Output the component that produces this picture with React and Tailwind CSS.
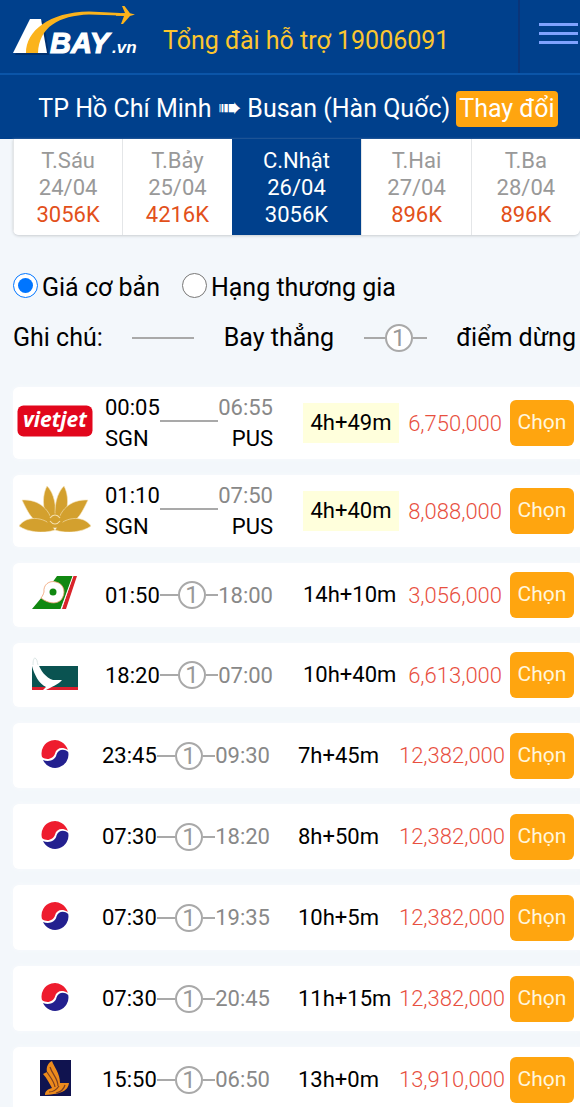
import React, { useState } from 'react';

const DAYS = [
  { name: 'T.Sáu', date: '24/04', price: '3056K' },
  { name: 'T.Bảy', date: '25/04', price: '4216K' },
  { name: 'C.Nhật', date: '26/04', price: '3056K' },
  { name: 'T.Hai', date: '27/04', price: '896K' },
  { name: 'T.Ba', date: '28/04', price: '896K' },
];

const FLIGHTS = [
  { id: 1, airline: 'vietjet', depart: '00:05', arrive: '06:55', from: 'SGN', to: 'PUS', duration: '4h+49m', price: 6750000 },
  { id: 2, airline: 'vietnam', depart: '01:10', arrive: '07:50', from: 'SGN', to: 'PUS', duration: '4h+40m', price: 8088000 },
  { id: 3, airline: 'eva', depart: '01:50', arrive: '18:00', stops: 1, duration: '14h+10m', price: 3056000 },
  { id: 4, airline: 'cathay', depart: '18:20', arrive: '07:00', stops: 1, duration: '10h+40m', price: 6613000 },
  { id: 5, airline: 'korean', depart: '23:45', arrive: '09:30', stops: 1, duration: '7h+45m', price: 12382000 },
  { id: 6, airline: 'korean', depart: '07:30', arrive: '18:20', stops: 1, duration: '8h+50m', price: 12382000 },
  { id: 7, airline: 'korean', depart: '07:30', arrive: '19:35', stops: 1, duration: '10h+5m', price: 12382000 },
  { id: 8, airline: 'korean', depart: '07:30', arrive: '20:45', stops: 1, duration: '11h+15m', price: 12382000 },
  { id: 9, airline: 'singapore', depart: '15:50', arrive: '06:50', stops: 1, duration: '13h+0m', price: 13910000 },
];

const formatPrice = (price) => price.toLocaleString('en-US');

const AbayLogo = () => (
  <svg className="overflow-visible" width="126" height="60" viewBox="0 0 126 60" role="img" aria-label="Abay.vn">
    <path d="M2 50 L20 16 H31 L36 50 Z" fill="#00265e" opacity="0.6" />
    <path d="M0 48 L17 14 H28 L34 48 Z" fill="#fff" />
    <path d="M13 48 C13 26 36 7 76 6.500 L107 8 L107 10.500 L76 9.500 C46 10.500 26 22 25 48 Z" fill="#fbb31c" />
    <path d="M103 8.200 L112 8 L109 1 H111.500 L117 8.200 L122 9.500 L117 11 L110 19 H108 L111 11 L103 10.800 Z" fill="#fbb31c" />
    <g fontFamily="Liberation Sans, sans-serif" fontStyle="italic" fontWeight="700">
      <text x="37" y="48" fontSize="29" fill="#fff" stroke="#fff" strokeWidth="1.200">BAY</text>
      <text x="99" y="48" fontSize="17" fill="#fff">.vn</text>
    </g>
  </svg>
);

const VietjetLogo = () => (
  <svg className="overflow-visible" width="76" height="32" viewBox="0 0 76 32" role="img" aria-label="Vietjet">
    <rect x="0.500" y="0.500" width="75" height="31" rx="6" fill="#e2061c" />
    <text x="38" y="22" textAnchor="middle" fontFamily="Open Sans, sans-serif" fontSize="21" fontWeight="700" fontStyle="italic" fill="#fff">
      vietjet
    </text>
  </svg>
);

const LotusLogo = () => (
  <svg width="72" height="46" viewBox="0 0 72 46" role="img" aria-label="Vietnam Airlines">
    <g fill="#d3a02e" stroke="#f6e6c0" strokeWidth="0.600">
      <path d="M35 38 C25 34 21 13 28 0 C35 7 38 20 36 36 Z" />
      <path d="M37 38 C34 20 38 7 45 0 C52 13 48 34 38 38 Z" />
      <path d="M34 42 C14 40 9 26 3 14 C20 13 33 24 34 42 Z" />
      <path d="M38 42 C39 24 52 13 69 14 C63 26 58 40 38 42 Z" />
      <path d="M36 44 C24 48 8 46 0 40 C8 28 29 31 36 44 Z" />
      <path d="M36 44 C43 31 64 28 72 40 C64 46 48 48 36 44 Z" />
    </g>
    <path d="M28 35 C31 25 41 25 44 35 C42 44 30 44 28 35 Z" fill="#d3a02e" />
    <path d="M31 32 C34 28 38 28 41 32 M31 35 C34 39 38 39 41 35" fill="none" stroke="#f3dfae" strokeWidth="1.200" />
  </svg>
);

const EvaLogo = () => (
  <svg width="46" height="36" viewBox="0 0 46 36" role="img" aria-label="EVA Air">
    <path d="M25 1 H41 L29 34 H0 L10 22 Z" fill="#118811" />
    <path d="M9 23 C11 20 11 20 12 17 C11 10 17 5 24 7 C33 9 34 19 29 25 C24 30 15 28 9 23 Z" fill="#fff" stroke="#f0a070" strokeWidth="0.800" />
    <circle cx="21" cy="17" r="3.500" fill="#118811" />
    <path d="M41 1 H45 L34 34 H30 Z" fill="#d8242a" />
    <path d="M41 1 L29 34" stroke="#fff" strokeWidth="1" />
  </svg>
);

const CathayLogo = () => (
  <svg width="48" height="34" viewBox="0 0 48 34" role="img" aria-label="Cathay Pacific">
    <rect x="1" y="10" width="46" height="21" fill="#0a5351" />
    <rect x="1" y="31" width="46" height="3" fill="#dc1f2d" />
    <path d="M1 5 C3 2 5 3 7 7 C9 14 15 22 22 24 H31 C27 29 20 31 15 34 H12 L15 31 C8 28 3 18 1 10 Z" fill="#fff" />
    <path d="M2 9 C2 4 3 2 4 2 C6 3 6 5 7 9" fill="none" stroke="#dbe6e5" strokeWidth="1" />
  </svg>
);

const KoreanLogo = () => (
  <svg width="28" height="28" viewBox="0 0 28 28" role="img" aria-label="Korean Air">
    <circle cx="14" cy="14" r="13" fill="#fff" />
    <path d="M1 17 A13.300 13.300 0 0 1 26.800 10 C21 6.500 15.500 8 14 13.500 C12.500 18.500 6 21 1 17 Z" fill="#ee1c2e" />
    <path d="M27.200 12 A13.300 13.300 0 0 1 2 20 C8 22.500 14.500 20 15.500 14.500 C17 9.500 23 8 27.200 12 Z" fill="#23208f" />
  </svg>
);

const SingaporeLogo = () => (
  <svg width="31" height="36" viewBox="0 0 31 36" role="img" aria-label="Singapore Airlines">
    <rect width="31" height="36" fill="#10134f" />
    <path d="M12 1 C14 7 20 13 20 23 L29 23 C28 30 23 34 5 35 C5 31 8 29 12 28 C9 23 7 18 3 14 L7 12 C6 7 8 3 12 1 Z" fill="#ec8a1c" />
    <path d="M7 12 C10 17 14 21 15 27 M10 7 C12 14 18 18 18 26 M9 32 C14 32 17 29 19 26 M16 33 C20 32 24 29 25 25" fill="none" stroke="#7c3f22" strokeWidth="1.200" />
  </svg>
);

const LOGOS = {
  vietjet: VietjetLogo,
  vietnam: LotusLogo,
  eva: EvaLogo,
  cathay: CathayLogo,
  korean: KoreanLogo,
  singapore: SingaporeLogo,
};

// Đường bay có điểm dừng
const StopLine = ({ stops }) => (
  <span className="flex flex-1 items-center">
    <span className="h-[2px] flex-[3] bg-[#a9a9a9]" />
    <span className="flex size-7 items-center justify-center rounded-full border-2 border-[#a9a9a9] bg-white text-2xl leading-6 text-[#999]">
      {stops}
    </span>
    <span className="h-[2px] flex-[2] bg-[#a9a9a9]" />
  </span>
);

const DayTab = ({ day, active, onClick }) => (
  <button
    type="button"
    aria-pressed={active}
    onClick={onClick}
    className={`flex flex-col items-center pt-2 pb-[7px] text-[22px] leading-[27px] ${
      active ? 'flex-[6] bg-[#00408c] text-white' : 'flex-[5] border-l border-[#e4e6e8] bg-white text-[#999]'
    }`}
  >
    <span>{day.name}</span>
    <span>{day.date}</span>
    <span className={active ? 'text-white' : 'text-[#e2501a]'}>{day.price}</span>
  </button>
);

const FlightRow = ({ flight }) => {
  const Logo = LOGOS[flight.airline];
  const direct = !flight.stops;
  // Giá từ 10 triệu cần cột rộng hơn
  const wide = flight.price >= 10000000;

  return (
    <li
      className={`flex items-center rounded-l-md bg-white pr-[6px] text-[22px] shadow-[0_0_4px_#f8fafc] ${
        direct ? 'h-[72px]' : wide ? 'h-[65px]' : 'h-16'
      }`}
    >
      <div className={`flex shrink-0 ${wide ? 'w-[89px]' : 'w-[92px]'}`}>
        <div className="flex w-[84px] justify-center pb-1">
          <Logo />
        </div>
      </div>

      <div className="flex w-[168px] shrink-0 items-center leading-[31px]">
        <div className="flex flex-col">
          <span>{flight.depart}</span>
          {direct && <span>{flight.from}</span>}
        </div>
        {direct ? <span className="mb-1 h-[2px] flex-1 bg-[#a9a9a9]" /> : <StopLine stops={flight.stops} />}
        <div className="flex flex-col items-end">
          <span className="text-[#888]">{flight.arrive}</span>
          {direct && <span>{flight.to}</span>}
        </div>
      </div>

      <div
        className={`w-24 shrink-0 whitespace-nowrap leading-10 ${wide ? 'ml-7' : 'ml-[30px]'} ${
          direct ? 'bg-[#ffffdc] text-center' : ''
        }`}
      >
        {flight.duration}
      </div>

      <div className={`flex-1 text-right font-light text-[#e8503f] ${wide ? 'pr-[5px]' : 'pr-2'}`}>
        {formatPrice(flight.price)}
      </div>

      <button type="button" className="h-[46px] w-16 shrink-0 rounded-md bg-[#ffa50f] text-[21px] text-[#fff6dc]">
        Chọn
      </button>
    </li>
  );
};

const App = () => {
  const [selectedDay, setSelectedDay] = useState(2);
  const [cabin, setCabin] = useState('basic');

  return (
    <div className="min-h-screen overflow-hidden bg-[#f3f7fb] font-[Roboto,sans-serif] text-[22px] text-black">
      <header className="bg-[#00408c]">
        <div className="flex h-[75px] border-b-2 border-[#0b55a8]">
          <a href="#home" className="pt-[5px] pl-[13px]">
            <AbayLogo />
          </a>
          <a href="tel:19006091" className="flex flex-1 items-center pt-2 pl-6 text-[25px] text-[#fcc62f]">
            Tổng đài hỗ trợ 19006091
          </a>
          <button type="button" aria-label="Menu" className="flex w-[62px] justify-end border-l-2 border-[#0a3579] pt-[23px] pr-[2px]">
            <span className="flex w-[39px] flex-col gap-[6px]">
              <span className="h-[3px] bg-[#7fa3ff]" />
              <span className="h-[3px] bg-[#7fa3ff]" />
              <span className="h-[3px] bg-[#7fa3ff]" />
            </span>
          </button>
        </div>
        <div className="flex h-16 items-center justify-center gap-[6px] pt-1 pl-4 text-[25px] leading-9 text-white">
          <h1>
            TP Hồ Chí Minh <span className="font-['DejaVu_Sans'] text-[28px] leading-6">➠</span> Busan (Hàn Quốc)
          </h1>
          <a href="#change" className="rounded-sm bg-[#ffa50f] px-[3px]">Thay đổi</a>
        </div>
      </header>

      <main className="pl-[13px]">
        <nav className="flex overflow-hidden rounded-b-md shadow-[0_1px_3px_#c8ccd0]">
          {DAYS.map((day, index) => (
            <DayTab key={day.date} day={day} active={index === selectedDay} onClick={() => setSelectedDay(index)} />
          ))}
        </nav>

        <div className="mt-[33px] flex items-center gap-[22px] text-[25px] leading-10">
          <label className="flex items-center gap-1">
            <input type="radio" name="cabin" className="mb-[6px] size-[25px]" checked={cabin === 'basic'} onChange={() => setCabin('basic')} />
            Giá cơ bản
          </label>
          <label className="flex items-center gap-1">
            <input type="radio" name="cabin" className="mb-[6px] size-[25px]" checked={cabin === 'business'} onChange={() => setCabin('business')} />
            Hạng thương gia
          </label>
        </div>

        <div className="mt-[10px] flex items-center justify-between pr-1 text-[25px] leading-10">
          <span>Ghi chú:</span>
          <span className="h-[2px] w-[62px] bg-[#a9a9a9]" />
          <span>Bay thẳng</span>
          <span className="flex w-[63px]">
            <StopLine stops={1} />
          </span>
          <span>điểm dừng</span>
        </div>

        <ul className="mt-[29px] flex flex-col gap-4">
          {FLIGHTS.map((flight) => (
            <FlightRow key={flight.id} flight={flight} />
          ))}
        </ul>
      </main>
    </div>
  );
};

export default App;
